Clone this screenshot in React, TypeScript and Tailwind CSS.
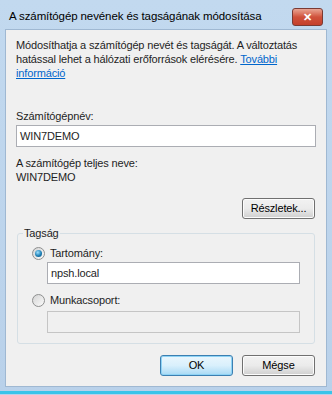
import * as React from 'react';

function Radio({ checked }: { checked?: boolean }) {
  return (
    <span className="relative flex h-[13px] w-[13px] items-center justify-center rounded-full border border-[#8e8f8f] bg-gradient-to-br from-[#d4d4d4] to-[#fbfbfb]">
      {checked && (
        <span className="h-[7px] w-[7px] rounded-full bg-[radial-gradient(circle_at_40%_35%,#9fe1ff,#1d7fb5_55%,#0c4d7a)]" />
      )}
    </span>
  );
}

function Button({ label, primary }: { label: string; primary?: boolean }) {
  return (
    <button
      className={
        'h-[21px] w-[73px] rounded-[3px] border leading-none text-black bg-gradient-to-b ' +
        (primary
          ? 'border-[#3c7fb1] from-[#eaf6fd] via-[#d9f0fc] to-[#a7d9f5] shadow-[inset_0_0_0_1px_#8ed3f5]'
          : 'border-[#707070] from-[#f2f2f2] via-[#ebebeb] to-[#cfcfcf] shadow-[inset_0_0_0_1px_#fcfcfc]')
      }
    >
      {label}
    </button>
  );
}

export default function App() {
  return (
    <div
      className="flex h-[395px] w-[332px] flex-col bg-gradient-to-b from-[#c2d9ef] to-[#b9d1ea] text-[11px] leading-[14px] tracking-[-0.15px] text-[#1e1e1e]"
      style={{ fontFamily: '"Liberation Sans", Arial, sans-serif' }}
    >
      {/* title bar */}
      <div className="flex h-[29px] shrink-0 items-start justify-between pl-[9px] pr-[9px]">
        <span className="mt-[8px] whitespace-nowrap text-[11.5px] leading-[16px] tracking-[-0.1px] text-black">
          A számítógép nevének és tagságának módosítása
        </span>
        <span className="mt-[8px] flex h-[18px] w-[31px] items-center justify-center rounded-[3px] border border-[#7a3a33] bg-gradient-to-b from-[#e8a493] via-[#d0513b] to-[#c4402c] text-[11px] font-bold leading-none text-white">
          ✕
        </span>
      </div>

      {/* client area */}
      <div className="mx-[5px] flex h-[358px] flex-col border border-[#9fb8d2] bg-[#f0f0f0] px-[10px] pt-[8px]">
        <p>
          Módosíthatja a számítógép nevét és tagságát. A változtatás hatással lehet a hálózati
          erőforrások elérésére.{' '}
          <span className="text-[#0066cc] underline">További információ</span>
        </p>

        <div className="mt-[29px]">Számítógépnév:</div>
        <div className="mt-[2px] flex h-[22px] items-center border border-[#abadb3] bg-white px-[3px]">
          WIN7DEMO
        </div>

        <div className="mt-[9px]">A számítógép teljes neve:</div>
        <div>WIN7DEMO</div>

        <div className="mt-[14px] flex justify-end pr-[1px]">
          <Button label="Részletek..." />
        </div>

        <div className="relative mt-[14px] ml-[1px] mr-[1px] h-[111px] rounded-[3px] border border-[#d5dfe5] px-[14px] pt-[12px]">
          <span className="absolute left-[5px] top-[-8px] bg-[#f0f0f0] px-[1px]">Tagság</span>
          <div className="flex items-center gap-[5px]">
            <Radio checked />
            <span>Tartomány:</span>
          </div>
          <div className="ml-[15px] mt-[2px] flex h-[22px] items-center border border-[#abadb3] bg-white px-[3px]">
            npsh.local
          </div>
          <div className="mt-[9px] flex items-center gap-[5px]">
            <Radio />
            <span>Munkacsoport:</span>
          </div>
          <div className="ml-[15px] mt-[4px] h-[22px] border border-[#c5c5c5] bg-[#f0f0f0]" />
        </div>

        <div className="mt-[11px] flex justify-end gap-[9px] pr-[1px]">
          <Button label="OK" primary />
          <Button label="Mégse" />
        </div>
      </div>
      <div className="mt-[4px] h-[3px] bg-[#39c4e9]" />
    </div>
  );
}
